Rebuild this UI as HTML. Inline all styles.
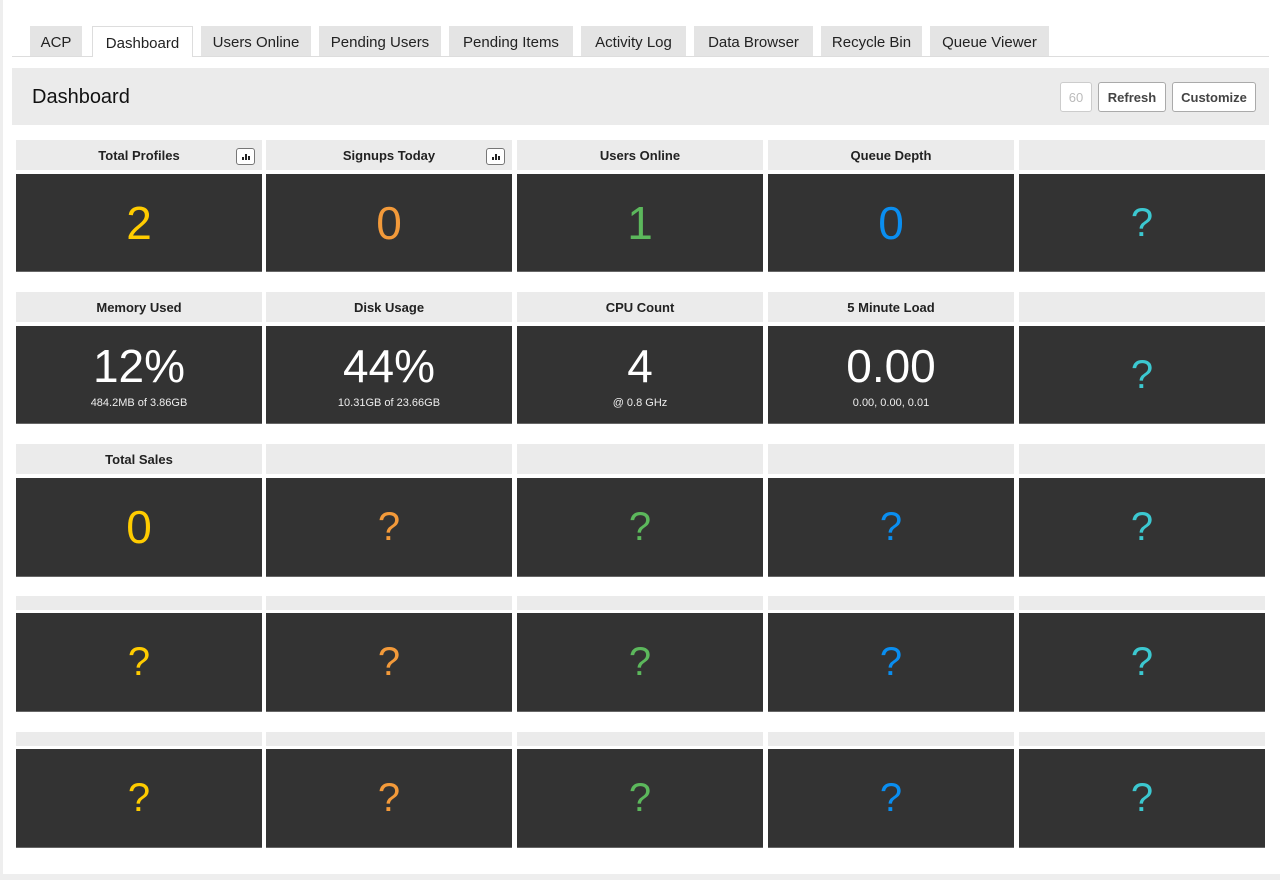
<!DOCTYPE html>
<html><head><style>
*{box-sizing:border-box;margin:0;padding:0}
body{width:1280px;height:880px;background:#fff;font-family:"Liberation Sans",sans-serif;position:relative;overflow:hidden}
.lb{position:absolute;left:0;top:0;width:3px;height:880px;background:#eee}
.bb{position:absolute;left:0;top:874px;width:1280px;height:6px;background:#eee}
.tabline{position:absolute;left:12px;top:56px;width:1257px;height:1px;background:#ddd}
.tab{position:absolute;top:26px;height:30px;background:#e4e4e4;font-size:15px;color:#222;display:flex;align-items:center;justify-content:center;padding-top:2px}
.tab.act{background:#fff;border:1px solid #ddd;border-bottom:none;height:31px}
.hdr{position:absolute;left:12px;top:68px;width:1257px;height:57px;background:#ebebeb}
.hdr h1{position:absolute;left:20px;top:18px;font-size:20px;font-weight:normal;color:#111}
.btn{position:absolute;top:14px;height:30px;border:1px solid #aaa;border-radius:3px;background:#fff;font-size:13px;font-weight:bold;color:#444;display:flex;align-items:center;justify-content:center}
.lab{position:absolute;background:#ebebeb;font-size:13px;font-weight:bold;color:#222;display:flex;align-items:center;justify-content:center}
.ic{position:absolute;right:7px;top:8px;width:19px;height:17px;border:1px solid #777;border-radius:3px;background:#fff;display:flex;align-items:flex-end;justify-content:center;gap:1px;padding-bottom:4px}
.ic i{display:block;width:2px;background:#222}
.box{position:absolute;background:#333;border-bottom:1px solid #666;display:flex;flex-direction:column;align-items:center;justify-content:center;color:#fff}
.big{font-size:46px;line-height:50px}
.q{font-size:40px;line-height:44px}
.sub{font-size:11px;margin-top:6px;color:#eee}
</style></head><body>
<div class="lb"></div><div class="bb"></div>
<div class="tabline"></div>
<div class="tab" style="left:30px;width:52px">ACP</div>
<div class="tab act" style="left:92px;width:101px">Dashboard</div>
<div class="tab" style="left:201px;width:110px">Users Online</div>
<div class="tab" style="left:319px;width:122px">Pending Users</div>
<div class="tab" style="left:449px;width:124px">Pending Items</div>
<div class="tab" style="left:581px;width:105px">Activity Log</div>
<div class="tab" style="left:694px;width:119px">Data Browser</div>
<div class="tab" style="left:821px;width:101px">Recycle Bin</div>
<div class="tab" style="left:930px;width:119px">Queue Viewer</div>
<div class="hdr"><h1>Dashboard</h1>
<div class="btn" style="left:1048px;width:32px;color:#bbb;border-color:#ccc;font-weight:normal">60</div>
<div class="btn" style="left:1086px;width:68px">Refresh</div>
<div class="btn" style="left:1160px;width:84px">Customize</div>
</div>
<div id="g"></div>
<script>
var xs=[16,266,517,768,1019],w=246;
var cols=["#ffcc00","#f39a3a","#5cb85c","#0a8ef0","#3cc8d0"];
var rows=[
 {lt:140,lh:30,bt:174,bh:98,c:[["Total Profiles","2",1],["Signups Today","0",1],["Users Online","1"],["Queue Depth","0"],["","?"]]},
 {lt:292,lh:30,bt:326,bh:98,c:[["Memory Used","12%",0,"484.2MB of 3.86GB"],["Disk Usage","44%",0,"10.31GB of 23.66GB"],["CPU Count","4",0,"@ 0.8 GHz"],["5 Minute Load","0.00",0,"0.00, 0.00, 0.01"],["","?"]]},
 {lt:444,lh:30,bt:478,bh:99,c:[["Total Sales","0"],["","?"],["","?"],["","?"],["","?"]]},
 {lt:596,lh:14,bt:613,bh:99,c:[["","?"],["","?"],["","?"],["","?"],["","?"]]},
 {lt:732,lh:14,bt:749,bh:99,c:[["","?"],["","?"],["","?"],["","?"],["","?"]]}
];
var h="";
rows.forEach(function(r){r.c.forEach(function(c,i){
 h+='<div class="lab" style="left:'+xs[i]+'px;top:'+r.lt+'px;width:'+w+'px;height:'+r.lh+'px">'+c[0]+(c[2]?'<span class="ic"><i style="height:3px"></i><i style="height:6px"></i><i style="height:4px"></i></span>':'')+'</div>';
 var col=c[3]?'#fff':cols[i];
 h+='<div class="box" style="left:'+xs[i]+'px;top:'+r.bt+'px;width:'+w+'px;height:'+r.bh+'px;color:'+col+'"><div class="'+(c[1]=="?"?"q":"big")+'">'+c[1]+'</div>'+(c[3]?'<div class="sub">'+c[3]+'</div>':'')+'</div>';
});});
document.getElementById("g").innerHTML=h;
</script>
</body></html>
